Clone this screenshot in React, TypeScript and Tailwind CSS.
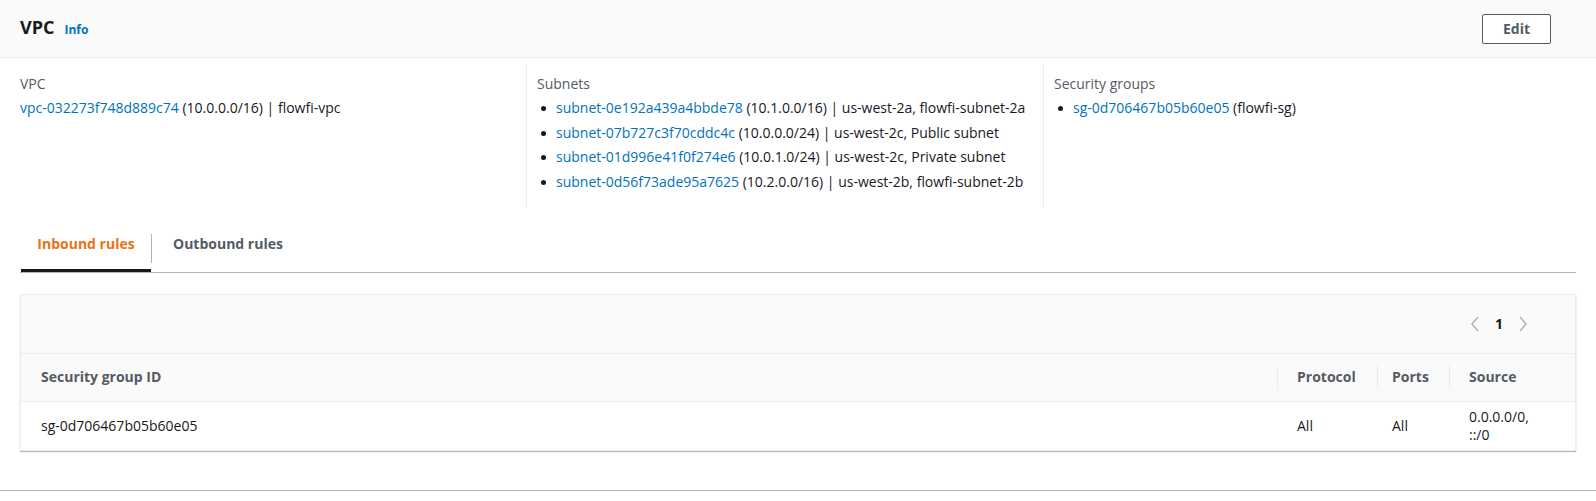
import React from "react";

const subnets = [
  ["subnet-0e192a439a4bbde78", "(10.1.0.0/16) | us-west-2a, flowfi-subnet-2a"],
  ["subnet-07b727c3f70cddc4c", "(10.0.0.0/24) | us-west-2c, Public subnet"],
  ["subnet-01d996e41f0f274e6", "(10.0.1.0/24) | us-west-2c, Private subnet"],
  ["subnet-0d56f73ade95a7625", "(10.2.0.0/16) | us-west-2b, flowfi-subnet-2b"],
];

function Bullet() {
  return <span className="mt-[9px] mr-[10px] inline-block h-[5px] w-[5px] shrink-0 rounded-full bg-[#16191f]" />;
}

export default function App() {
  return (
    <div className="h-[501px] w-[1596px] bg-white font-['Open_Sans',sans-serif] text-[14px] leading-[22px] text-[#16191f]">
      <div className="h-[491px] border-b border-[#aab7b8]">
        {/* Header */}
        <div className="flex h-[58px] items-center justify-between border-b border-[#eaeded] bg-[#fafafa] pl-[20px] pr-[45px]">
          <div className="flex items-baseline gap-[10px]">
            <span className="text-[18px] font-bold">VPC</span>
            <span className="text-[12px] font-bold text-[#0073bb]">Info</span>
          </div>
          <button className="h-[30px] w-[69px] rounded-[2px] border border-[#545b64] bg-white text-[14px] font-bold text-[#545b64]">
            Edit
          </button>
        </div>

        {/* Details */}
        <div className="flex pl-[20px] pr-[20px] pt-[7px]">
          <div className="w-[506px] shrink-0 pt-[8px] pr-[10px]">
            <div className="text-[#545b64]">VPC</div>
            <div className="mt-[2px]">
              <span className="text-[#0073bb]">vpc-032273f748d889c74</span> (10.0.0.0/16) | flowfi-vpc
            </div>
          </div>
          <div className="w-[517px] shrink-0 border-l border-[#eaeded] pt-[8px] pb-[14px] pl-[10px]">
            <div className="text-[#545b64]">Subnets</div>
            <ul className="mt-[2px] flex flex-col gap-[2.5px]">
              {subnets.map(([id, rest]) => (
                <li key={id} className="flex pl-[4px]">
                  <Bullet />
                  <span>
                    <span className="text-[#0073bb]">{id}</span> {rest}
                  </span>
                </li>
              ))}
            </ul>
          </div>
          <div className="flex-1 border-l border-[#eaeded] pt-[8px] pl-[10px]">
            <div className="text-[#545b64]">Security groups</div>
            <ul className="mt-[2px]">
              <li className="flex pl-[4px]">
                <Bullet />
                <span>
                  <span className="text-[#0073bb]">sg-0d706467b05b60e05</span> (flowfi-sg)
                </span>
              </li>
            </ul>
          </div>
        </div>

        {/* Tabs */}
        <div className="mx-[20px] mt-[18px] flex h-[48px] border-b border-[#aab7b8]">
          <div className="ml-px flex h-full w-[130px] items-center justify-center border-b-[3px] border-[#16191f] pb-[5px] font-bold text-[#ec7211]">
            Inbound rules
          </div>
          <div className="mt-[9px] mb-[9px] w-px bg-[#aab7b8]" />
          <div className="flex h-full items-center px-[21px] pb-[8px] font-bold text-[#545b64]">Outbound rules</div>
        </div>

        {/* Table */}
        <div className="mx-[20px] mt-[21px] border border-[#eaeded] shadow-[0_1px_1px_0_rgba(0,28,36,0.3)]">
          <div className="flex h-[58px] items-center justify-end gap-[14px] bg-[#fafafa] pr-[46px]">
            <svg width="12" height="18" viewBox="0 0 12 18" fill="none" stroke="#aab7b8" strokeWidth="1.5">
              <path d="M9 2 L3 9 L9 16" />
            </svg>
            <span className="font-bold text-[#16191f]">1</span>
            <svg width="12" height="18" viewBox="0 0 12 18" fill="none" stroke="#aab7b8" strokeWidth="1.5">
              <path d="M3 2 L9 9 L3 16" />
            </svg>
          </div>
          <div className="flex h-[48px] items-center border-t border-[#eaeded] bg-[#fafafa] font-bold text-[#545b64]">
            <div className="flex-1 pl-[20px]">Security group ID</div>
            <div className="flex h-[24px] w-[100px] items-center border-l border-[#eaeded] pl-[19px]">Protocol</div>
            <div className="flex h-[24px] w-[72px] items-center border-l border-[#eaeded] pl-[14px]">Ports</div>
            <div className="flex h-[24px] w-[126px] items-center border-l border-[#eaeded] pl-[19px]">Source</div>
          </div>
          <div className="flex h-[49px] items-center border-t border-[#eaeded] bg-white">
            <div className="flex-1 pl-[20px]">sg-0d706467b05b60e05</div>
            <div className="w-[100px] pl-[20px]">All</div>
            <div className="w-[72px] pl-[15px]">All</div>
            <div className="w-[126px] pl-[20px] leading-[18px]">
              0.0.0.0/0,
              <br />
              ::/0
            </div>
          </div>
        </div>
      </div>
    </div>
  );
}
